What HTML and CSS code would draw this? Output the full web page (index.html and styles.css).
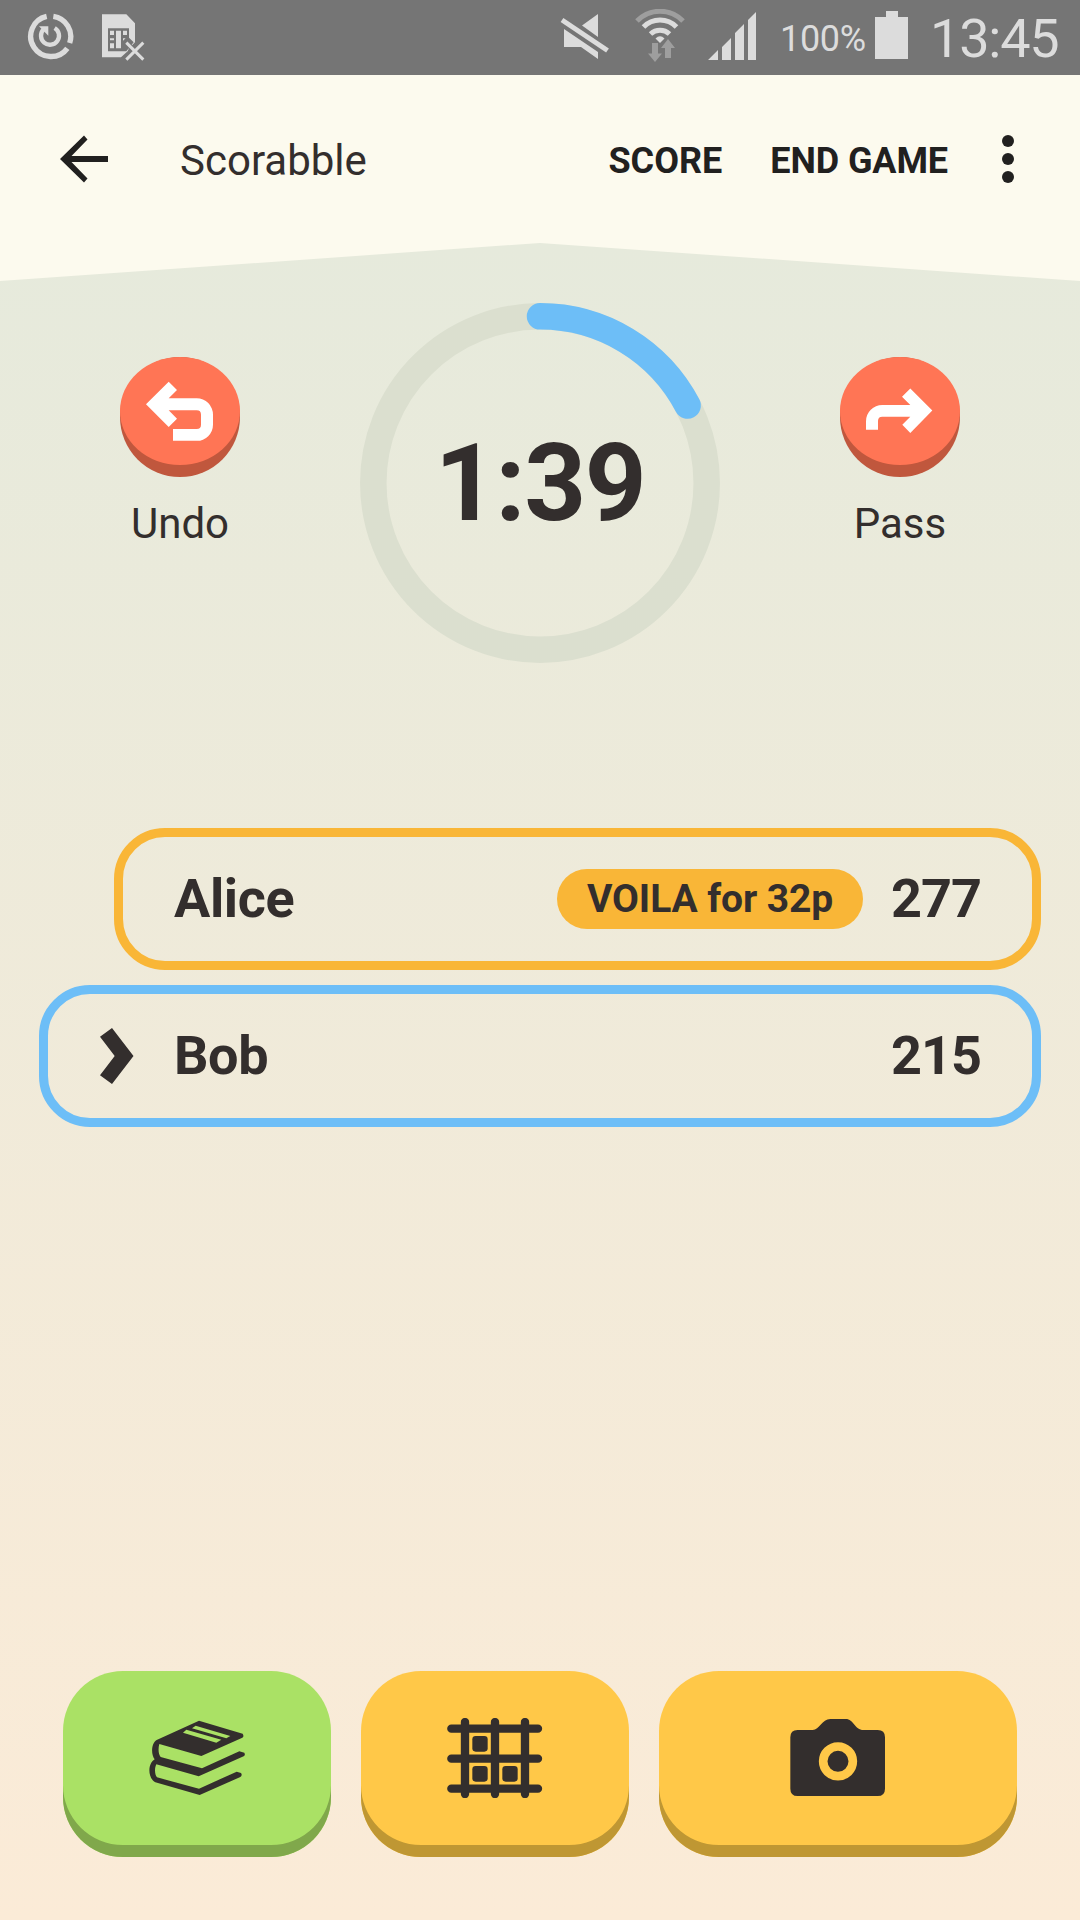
FILE: index.html
```html
<!DOCTYPE html>
<html lang="en">
<head>
<meta charset="utf-8">
<title>Scorabble</title>
<link rel="stylesheet" href="styles.css">
</head>
<body>
<div class="status">
  <svg class="status-sync" width="48" height="48" viewBox="0 0 144 144">
    <g fill="none" stroke="#dcdcdc">
      <path d="M62 10A61 61 0 1 0 124 106M82 10A61 61 0 0 1 131 90" stroke-width="16"/>
      <path d="M53 49A27 27 0 1 0 86 45" stroke-width="13"/>
    </g>
    <path d="M39 40H67V68Z" fill="#dcdcdc"/>
  </svg>
  <svg class="status-sim" width="44" height="48" viewBox="0 0 132 144">
    <path d="M3 4H76L102 31V88L84 106L80 115L60 133H3Z" fill="#dcdcdc"/>
    <path d="M21 46H84V74L98 88L76 115H21Z" fill="#757575"/>
    <path d="M27 53h12v13h-12zM45 53h15v53h-15zM66 53h12v13h-12zM27 76h12v6h-12zM27 91h12v15h-12zM66 76h8l-8 7z" fill="#dcdcdc"/>
    <path d="M76 89L127 140M127 89L76 140" stroke="#757575" stroke-width="15"/>
    <path d="M76 89L127 140M127 89L76 140" stroke="#dcdcdc" stroke-width="9"/>
  </svg>
  <svg class="status-mute" width="50" height="48" viewBox="0 0 50 48">
    <path d="M38 1V24L22 12.500ZM4 16L38 39V46L21 34H4Z" fill="#dcdcdc"/>
    <path d="M2 7L47.500 37.500" stroke="#dcdcdc" stroke-width="5"/>
  </svg>
  <svg class="status-wifi" width="50" height="54" viewBox="0 0 50 54">
    <g fill="none">
      <path d="M2 12A32 32 0 0 1 48 12" stroke="#9e9e9e" stroke-width="5"/>
      <path d="M8.500 18A23 23 0 0 1 41.500 18" stroke="#dcdcdc" stroke-width="5"/>
      <path d="M15.500 25A14 14 0 0 1 34.500 25" stroke="#dcdcdc" stroke-width="5"/>
    </g>
    <path d="M20.500 29.500Q25 25 29.500 29.500L25 34Z" fill="#dcdcdc"/>
    <path d="M17 34H23V44.500H27L20 53L13 44.500H17ZM30 49V39H26L33 30L40 39H36V49Z" fill="#9e9e9e"/>
  </svg>
  <svg class="status-signal" width="49" height="48" viewBox="0 0 49 48" fill="#dcdcdc">
    <path d="M0 48L10 38V48ZM14 48V35L23 26V48ZM27 48V21L36 12V48ZM40 48V8L48 0V48Z"/>
  </svg>
  <span class="battery-level">100%</span>
  <svg class="status-battery" width="33" height="48" viewBox="0 0 33 48" fill="#dcdcdc">
    <path d="M0 6H11V0H23V6H33V48H0Z"/>
  </svg>
  <span class="clock">13:45</span>
</div>

<header class="toolbar">
  <svg class="back" width="48" height="48" viewBox="0 0 48 48">
    <path d="M48 21V27H11.500L27.500 43.500L24 47.500L0 24L24 0.500L27.500 4.500L11.500 21Z" fill="#21201f"/>
  </svg>
  <h1 class="title">Scorabble</h1>
  <span class="action action-score">SCORE</span>
  <span class="action action-end">END GAME</span>
  <svg class="more" width="12" height="48" viewBox="0 0 12 48" fill="#21201f">
    <circle cx="6" cy="6" r="6"/><circle cx="6" cy="24" r="6"/><circle cx="6" cy="42" r="6"/>
  </svg>
</header>

<main class="game">
  <section class="controls">
    <div class="control">
      <div class="round">
        <svg width="120" height="108" viewBox="0 0 120 108" fill="#fff">
          <path d="M26 47.300L48.700 24.700L57 33L48.700 41.300H76.700A16.300 16.300 0 0 1 93 57.700V67.700A16.200 16.200 0 0 1 76.700 83.800H53V72H76.700Q81 72 81 67.700V57.700Q81 53.300 76.700 53.300H48.700L57 61.700L48.700 70Z"/>
        </svg>
      </div>
      <span class="control-label">Undo</span>
    </div>
    <div class="timer">
      <svg width="360" height="360" viewBox="0 0 360 360" fill="none" stroke-width="26.500">
        <circle cx="180" cy="180" r="166.700" stroke="#dbdfcf"/>
        <path d="M180 13.300A166.700 166.700 0 0 1 327.600 102.500" stroke="#6dbef7" stroke-linecap="round"/>
      </svg>
      <span class="timer-value">1:39</span>
    </div>
    <div class="control">
      <div class="round">
        <svg width="120" height="108" viewBox="0 0 120 108" fill="#fff">
          <path d="M26 72.700V64.300A16.300 16.300 0 0 1 42.300 48H70.300L62 39.700L70.300 31.500L92.300 53.500L70.300 76L62.300 67.700L70.300 59.700H42.300Q38 59.700 38 64V72.700Z"/>
        </svg>
      </div>
      <span class="control-label">Pass</span>
    </div>
  </section>

  <section class="players">
    <div class="player player-alice">
      <span class="name">Alice</span>
      <span class="last-move">VOILA for 32p</span>
      <span class="score">277</span>
    </div>
    <div class="player player-bob">
      <svg class="turn" width="34" height="56" viewBox="0 0 34 56">
        <path d="M0 8.700L12 0L33.500 28L12 56L0 47.300L14.700 28Z" fill="#332e2d"/>
      </svg>
      <span class="name">Bob</span>
      <span class="score">215</span>
    </div>
  </section>

  <nav class="buttons">
    <div class="button button-green">
      <svg width="96" height="80" viewBox="327 204 288 240">
        <path d="M477 212L608 251Q613 260 607 263L484 318L358 282C354 295 355 313 362 321L486 355L598 304L613 308Q617 316 611 319L476 379L349 343C343 355 344 374 351 382L477 416L590 365L603 369Q608 376 601 381L479 435L346 397C323 384 322 342 344 328C332 312 334 280 350 270Z" fill="#332e2d"/>
        <path d="M467 227L571 258L559 265L456 235ZM439 239L544 269L529 278L429 248Z" fill="#aae165"/>
      </svg>
    </div>
    <div class="button">
      <svg width="96" height="80" viewBox="321 204 288 240">
        <path d="M334 236H594M334 326H594M334 416H594M375 216V432M465 216V432M555 216V432" stroke="#332e2d" stroke-width="25" stroke-linecap="round"/>
        <g fill="#332e2d">
          <rect x="397" y="258" width="46" height="47" rx="10"/>
          <rect x="397" y="348" width="46" height="47" rx="10"/>
          <rect x="487" y="348" width="46" height="47" rx="10"/>
        </g>
      </svg>
    </div>
    <div class="button button-wide">
      <svg width="96" height="80" viewBox="450 204 288 240">
        <path d="M473 240H518C538 240 546 207 571 207H617C642 207 643 240 671 240H713Q735 240 735 262V416Q735 438 713 438H473Q451 438 451 416V262Q451 240 473 240Z" fill="#332e2d"/>
        <circle cx="594" cy="334" r="44.500" fill="none" stroke="#ffc848" stroke-width="26"/>
      </svg>
    </div>
  </nav>
</main>
</body>
</html>
```

FILE: styles.css
```css
* {
  box-sizing: border-box;
}

body {
  margin: 0;
  width: 1080px;
  height: 1920px;
  display: flex;
  flex-direction: column;
  overflow: hidden;
  font-family: Roboto, sans-serif;
  color: #332e2d;
  background: linear-gradient(#e6eadc 243px, #fbebd7 1920px);
}

svg {
  display: block;
  flex: none;
}

.status {
  height: 75px;
  flex: none;
  display: flex;
  align-items: flex-start;
  padding: 0 22px 0 26px;
  background: #757575;
  color: #dcdcdc;
  white-space: nowrap;
}

.status-sync {
  margin-top: 13px;
}

.status-sim {
  margin: 13px 0 0 27px;
}

.status-mute {
  margin: 13px 0 0 auto;
}

.status-wifi {
  margin: 9px 0 0 25px;
}

.status-signal {
  margin: 12px 0 0 23px;
}

.battery-level {
  width: 93px;
  margin-left: 23px;
  font-size: 36px;
  letter-spacing: -0.3px;
  line-height: 79px;
}

.status-battery {
  margin: 11px 0 0 2px;
}

.clock {
  width: 128px;
  margin-left: 22px;
  font-size: 54px;
  letter-spacing: -1.2px;
  line-height: 77px;
}

.toolbar {
  height: 206px;
  flex: none;
  display: flex;
  align-items: center;
  padding: 0 66px 38px 60px;
  background: #fcfaee;
  clip-path: polygon(0 0, 100% 0, 100% 100%, 50% 168px, 0 100%);
  white-space: nowrap;
}

.title {
  margin: 3px auto 0 72px;
  font-size: 42px;
  font-weight: 400;
  line-height: 48px;
}

.action {
  margin-top: 3px;
  font-size: 36px;
  font-weight: 700;
  line-height: 42px;
  color: #21201f;
}

.action-end {
  margin-left: 48px;
  letter-spacing: -0.1px;
}

.more {
  margin-left: 54px;
}

.game {
  flex: 1;
  display: flex;
  flex-direction: column;
  padding-top: 22px;
}

.controls {
  display: grid;
  grid-template-columns: repeat(3, 360px);
}

.control {
  display: flex;
  flex-direction: column;
  align-items: center;
  padding-top: 54px;
}

.round {
  width: 120px;
  height: 120px;
  border-radius: 50%;
  background: #c0573d;
}

.round svg {
  border-radius: 50%;
  background: #ff7555;
}

.control-label {
  margin-top: 22px;
  font-size: 42px;
  line-height: 49px;
}

.timer {
  display: grid;
  place-items: center;
}

.timer > * {
  grid-area: 1 / 1;
}

.timer-value {
  font-size: 108px;
  font-weight: 700;
  letter-spacing: -1.5px;
  line-height: 126px;
}

.players {
  display: flex;
  flex-direction: column;
  gap: 15px;
  padding: 165px 39px 0;
}

.player {
  height: 142px;
  display: flex;
  align-items: center;
  padding: 0 51px;
  border: 9px solid #f9b637;
  border-radius: 51px;
  font-size: 54px;
  font-weight: 700;
  line-height: 64px;
}

.player-alice {
  margin-left: 75px;
}

.player-bob {
  border-color: #6dbef7;
}

.name {
  margin-right: auto;
  letter-spacing: -0.4px;
}

.score {
  letter-spacing: -1px;
}

.turn {
  margin: 0 40px 0 1px;
}

.last-move {
  width: 306px;
  height: 60px;
  margin-right: 28px;
  border-radius: 30px;
  background: #f9b637;
  font-size: 39px;
  letter-spacing: -0.1px;
  line-height: 61px;
  text-align: center;
}

.buttons {
  display: grid;
  grid-template-columns: 268px 268px 358px;
  gap: 30px;
  margin-top: auto;
  padding: 0 63px 63px;
}

.button {
  height: 186px;
  display: flex;
  align-items: center;
  justify-content: center;
  padding-bottom: 12px;
  border-radius: 60px;
  background: #ffc848;
  box-shadow: inset 0 -12px #bf9733;
}

.button-green {
  background: #aae165;
  box-shadow: inset 0 -12px #80a84b;
}
```
